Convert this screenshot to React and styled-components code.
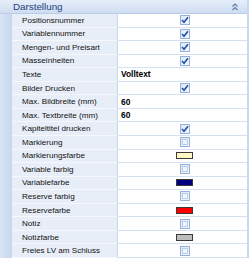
import React from "react";
import styled, { createGlobalStyle } from "styled-components";

const GlobalStyle = createGlobalStyle`
  html, body {
    margin: 0;
    padding: 0;
    background: #ffffff;
  }
`;

const rows = [
  { label: "Positionsnummer", type: "check", checked: true },
  { label: "Variablennummer", type: "check", checked: true },
  { label: "Mengen- und Preisart", type: "check", checked: true },
  { label: "Masseinheiten", type: "check", checked: true },
  { label: "Texte", type: "text", value: "Volltext" },
  { label: "Bilder Drucken", type: "check", checked: true },
  { label: "Max. Bildbreite (mm)", type: "text", value: "60" },
  { label: "Max. Textbreite (mm)", type: "text", value: "60" },
  { label: "Kapiteltitel drucken", type: "check", checked: true },
  { label: "Markierung", type: "check", checked: false },
  { label: "Markierungsfarbe", type: "color", color: "#fff7c4" },
  { label: "Variable farbig", type: "check", checked: false },
  { label: "Variablefarbe", type: "color", color: "#00007e" },
  { label: "Reserve farbig", type: "check", checked: false },
  { label: "Reservefarbe", type: "color", color: "#ff0000" },
  { label: "Notiz", type: "check", checked: false },
  { label: "Notizfarbe", type: "color", color: "#bdbdbd" },
  { label: "Freies LV am Schluss", type: "check", checked: false },
];

const CheckBox = ({ checked }) => (
  <Box>
    {checked ? (
      <svg width="8" height="8" viewBox="0 0 8 8">
        <path d="M1 4 L3 6.2 L7 1.2" fill="none" stroke="#1f4fa8" strokeWidth="1.6" />
      </svg>
    ) : (
      <Inner />
    )}
  </Box>
);

const App = () => {
  return (
    <>
      <GlobalStyle />
      <Grid>
        <Header>
          <span>Darstellung</span>
          <svg width="8" height="8" viewBox="0 0 8 8">
            <path d="M1.5 3.5 L4 1 L6.5 3.5 M1.5 7 L4 4.5 L6.5 7" fill="none" stroke="#5a78a8" strokeWidth="1.1" />
          </svg>
        </Header>
        <Body>
          {rows.map((r) => (
            <Row key={r.label}>
              <Gutter />
              <Label>{r.label}</Label>
              <Value $align={r.type === "text" ? "left" : "center"}>
                {r.type === "check" && <CheckBox checked={r.checked} />}
                {r.type === "text" && r.value}
                {r.type === "color" && <Swatch $color={r.color} />}
              </Value>
            </Row>
          ))}
        </Body>
      </Grid>
    </>
  );
};

const Grid = styled.div`
  width: 247px;
  height: 258px;
  display: flex;
  flex-direction: column;
  border-right: 2px solid #c9d8ee;
  font-family: "Liberation Sans", Arial, sans-serif;
  overflow: hidden;
`;

const Header = styled.div`
  height: 14px;
  flex: none;
  display: flex;
  align-items: center;
  justify-content: space-between;
  padding: 0 8px 0 13px;
  background: linear-gradient(#e6eefa, #cfddf2);
  border-bottom: 1px solid #b9cce8;
  box-sizing: border-box;
  span {
    font-size: 9.8px;
    color: #1d3f78;
  }
`;

const Body = styled.div`
  flex: 1;
  display: grid;
  grid-template-rows: repeat(18, 1fr);
`;

const Row = styled.div`
  display: grid;
  grid-template-columns: 12px 106px 1fr;
  min-height: 0;
`;

const Gutter = styled.div`
  background: linear-gradient(90deg, #d9e4f4, #c8d7ee);
`;

const Label = styled.div`
  display: flex;
  align-items: center;
  padding-left: 10px;
  font-size: 8.1px;
  color: #111;
  background: #e8eef8;
  border-bottom: 1px solid #f6f8fc;
  border-right: 1px solid #c9d8ee;
  white-space: nowrap;
  overflow: hidden;
`;

const Value = styled.div`
  display: flex;
  align-items: center;
  justify-content: ${(p) => (p.$align === "left" ? "flex-start" : "center")};
  padding-left: ${(p) => (p.$align === "left" ? "3px" : "4px")};
  font-size: 8.4px;
  font-weight: bold;
  color: #000;
  background: #fff;
  border-bottom: 1px solid #d5e1f2;
`;

const Box = styled.div`
  width: 8px;
  height: 8px;
  border: 1px solid #94b2dc;
  background: linear-gradient(135deg, #dfe8f6, #f4f7fc);
  display: flex;
  align-items: center;
  justify-content: center;
`;

const Inner = styled.div`
  width: 4px;
  height: 4px;
  border: 1px solid #b8cdea;
  background: #f2f6fc;
`;

const Swatch = styled.div`
  width: 15px;
  height: 5px;
  border: 1px solid #3a3a3a;
  background: ${(p) => p.$color};
`;

export default App;
